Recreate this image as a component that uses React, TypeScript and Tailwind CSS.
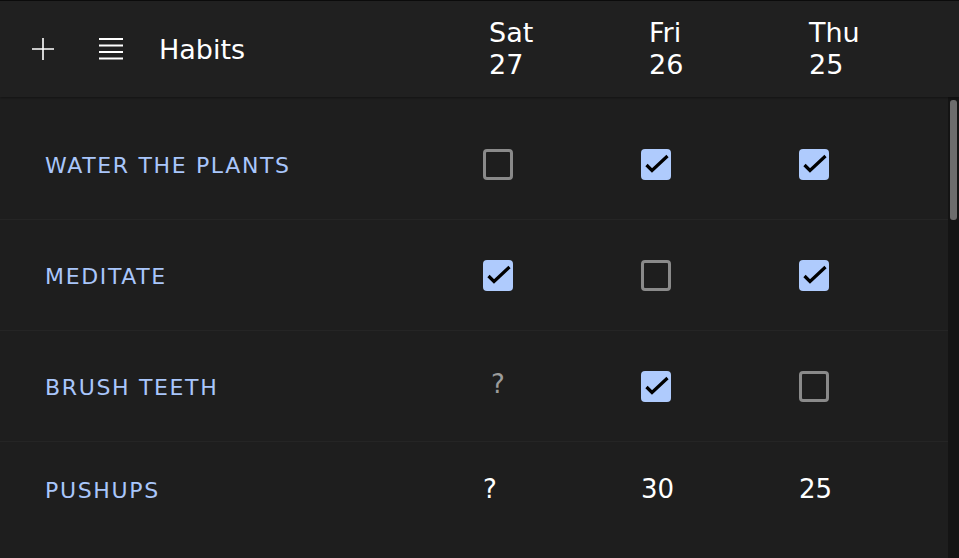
import React from "react";

type Cell = "on" | "off" | "q" | string;

const habits: { name: string; cells: Cell[]; numeric?: boolean }[] = [
  { name: "WATER THE PLANTS", cells: ["off", "on", "on"] },
  { name: "MEDITATE", cells: ["on", "off", "on"] },
  { name: "BRUSH TEETH", cells: ["q", "on", "off"] },
  { name: "PUSHUPS", cells: ["?", "30", "25"], numeric: true },
];

const days = [
  { d: "Sat", n: "27", w: "w-[160px]" },
  { d: "Fri", n: "26", w: "w-[160px]" },
  { d: "Thu", n: "25", w: "w-[150px]" },
];

function Box({ checked }: { checked: boolean }) {
  if (checked) {
    return (
      <div className="w-[30px] h-[31px] rounded-[4px] bg-[#afcbfd]">
        <svg width="30" height="31" viewBox="0 0 30 31">
          <path d="M5.5 16 L11 21.5 L26.5 7" fill="none" stroke="#000" strokeWidth="3.2" strokeLinecap="butt" strokeLinejoin="miter" />
        </svg>
      </div>
    );
  }
  return <div className="w-[30px] h-[31px] rounded-[4px] border-[3px] border-[#8a8a8a]" />;
}

export default function App() {
  return (
    <div
      className="w-[959px] h-[558px] bg-[#1e1e1e] text-white flex flex-col overflow-hidden"
      style={{ fontFamily: '"DejaVu Sans", sans-serif' }}
    >
      <header className="h-[97px] shrink-0 bg-[#202020] border-t border-[#0b0b0b] flex items-center shadow-[0_1px_2px_rgba(0,0,0,0.35)] relative z-10">
        <div className="w-[85px] flex justify-center pl-[1px]">
          <svg width="22" height="22" viewBox="0 0 22 22">
            <path d="M11 0 V22 M0 11 H22" stroke="#fff" strokeWidth="1.6" />
          </svg>
        </div>
        <div className="w-[75px] flex pl-[14px]">
          <svg width="24" height="22" viewBox="0 0 24 22">
            <path d="M0 1 H24 M0 7.5 H24 M0 14 H24 M0 20.5 H24" stroke="#fff" strokeWidth="1.8" />
          </svg>
        </div>
        <div className="text-[27px] leading-none flex-1 -ml-[1px]">Habits</div>
        <div className="flex">
          {days.map((x) => (
            <div key={x.d} className={`${x.w} text-[27px] leading-[32px]`}>
              <div>{x.d}</div>
              <div>{x.n}</div>
            </div>
          ))}
        </div>
      </header>
      <div className="flex flex-1 min-h-0">
        <div className="flex-1 min-w-0 overflow-hidden pt-[12px]">
          {habits.map((h, i) => (
            <div
              key={h.name}
              className={
                i < 3
                  ? "h-[111px] flex items-center border-b border-[#252525]"
                  : "h-[93px] flex items-center"
              }
            >
              <div className="w-[483px] shrink-0 pl-[45px] pt-[3px] text-[#a9c6fb] text-[22px] tracking-[1.65px]">{h.name}</div>
              {h.cells.map((c, j) => (
                <div key={j} className="w-[158px] shrink-0 flex items-center">
                  {c === "on" && <Box checked />}
                  {c === "off" && <Box checked={false} />}
                  {c === "q" && (
                    <div className="w-[30px] text-center text-[#9c9c9c] text-[26px] leading-none -mt-[4px]">?</div>
                  )}
                  {h.numeric && <div className="text-[26px] leading-none">{c}</div>}
                </div>
              ))}
            </div>
          ))}
        </div>
        <div className="w-[11px] shrink-0 bg-[#141414] flex justify-center pt-[3px]">
          <div className="w-[7px] h-[120px] rounded-[3px] bg-[#6d6d6d]" />
        </div>
      </div>
    </div>
  );
}
